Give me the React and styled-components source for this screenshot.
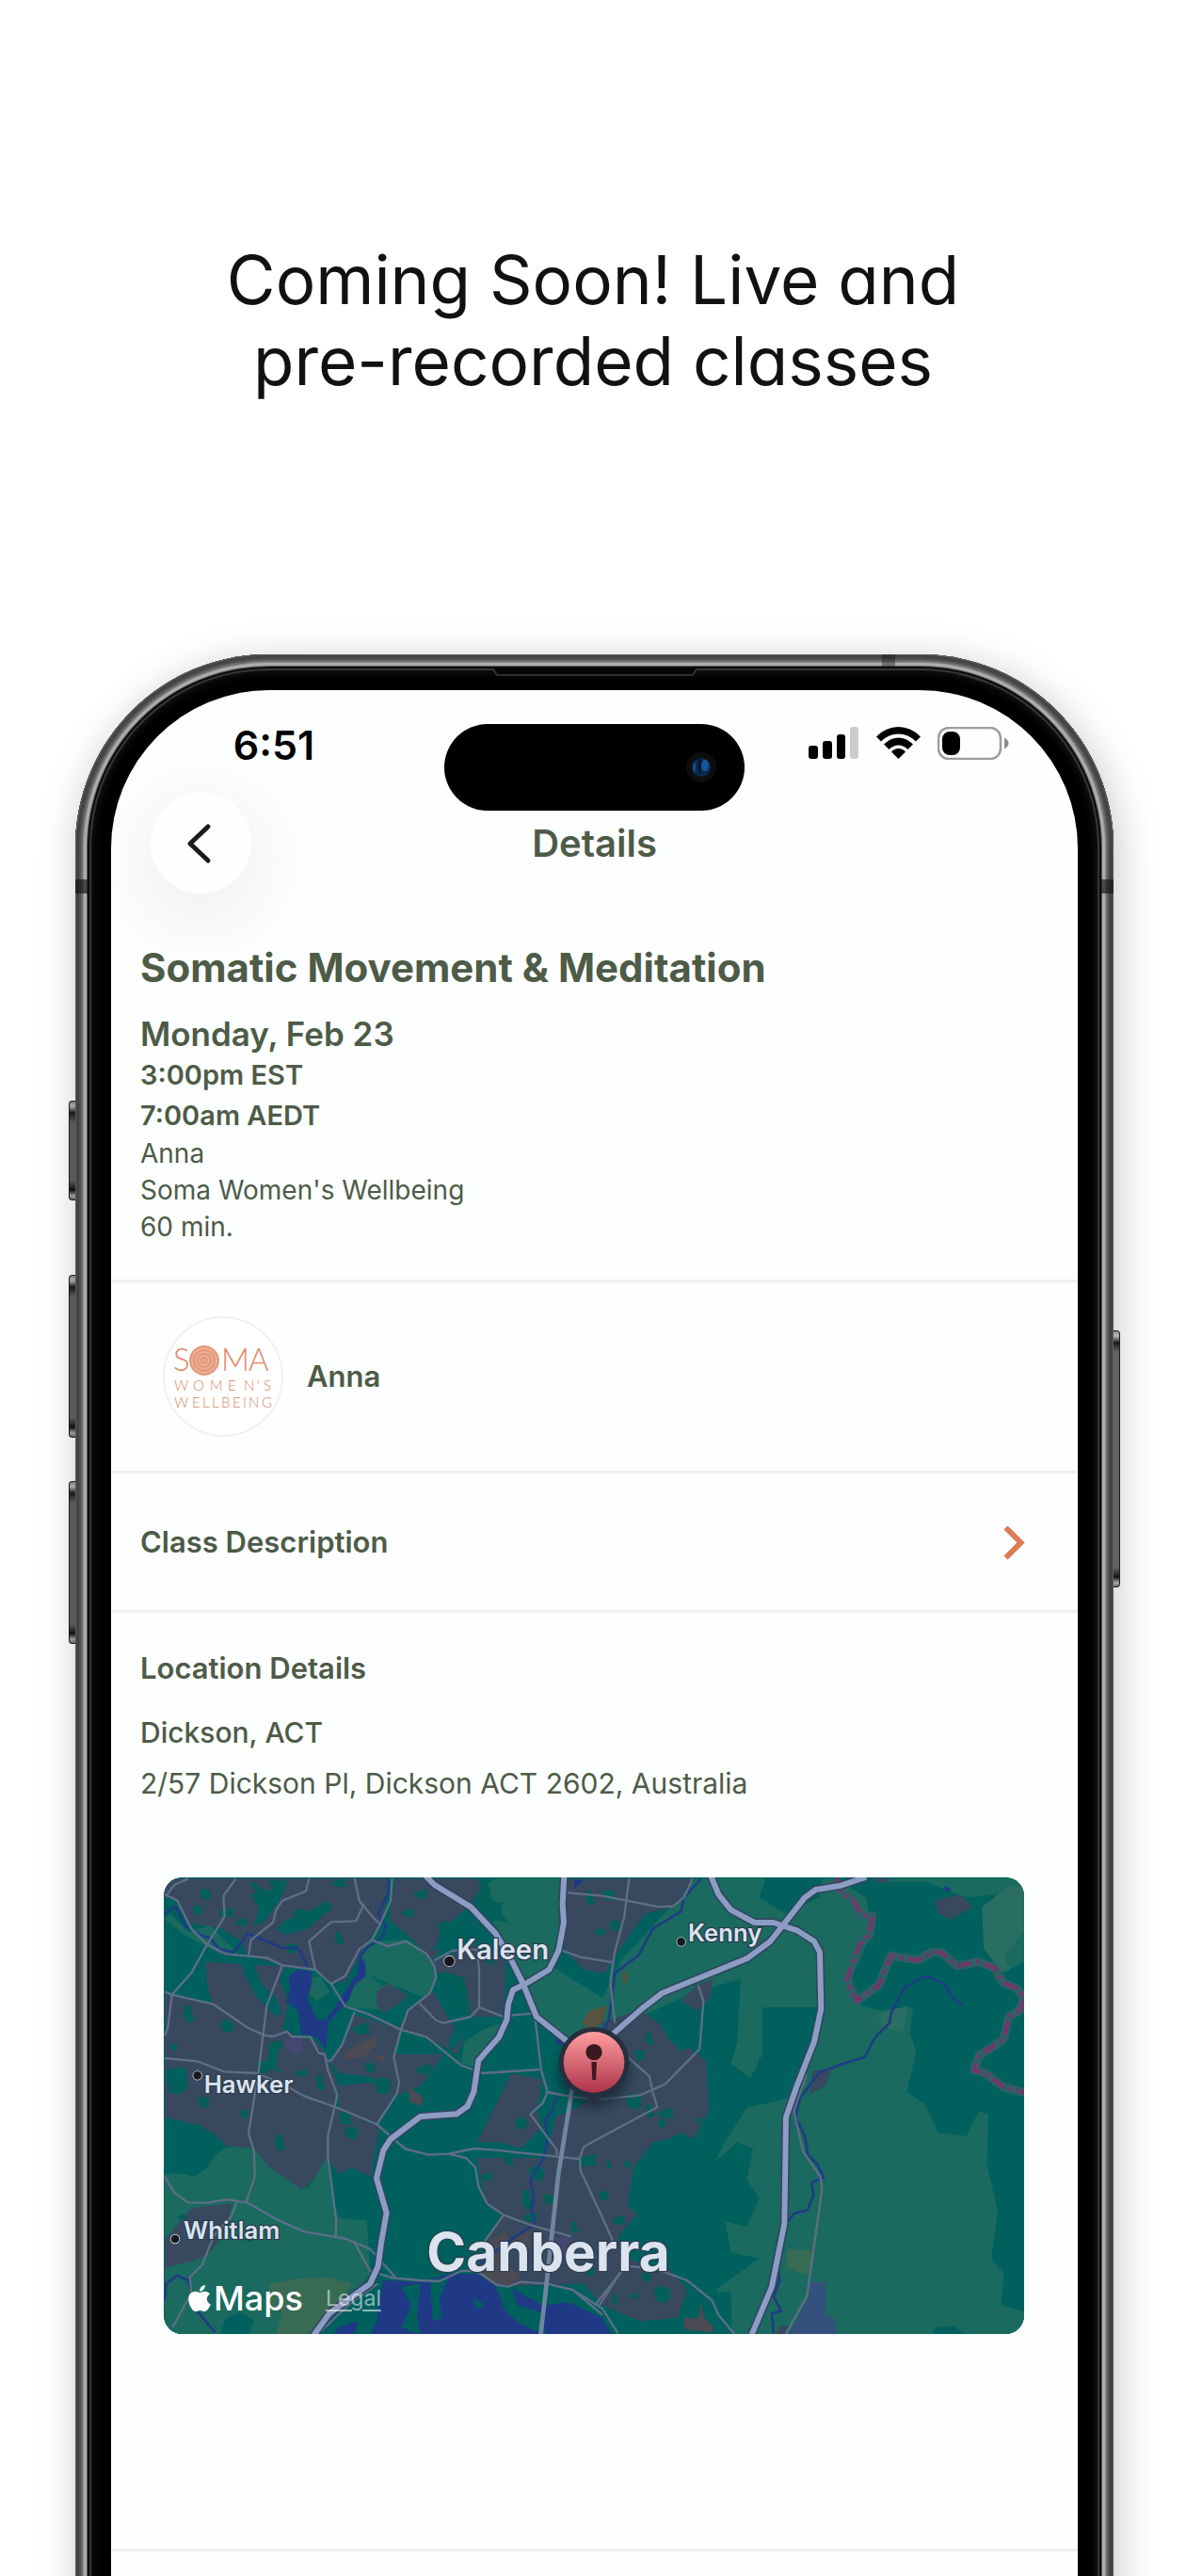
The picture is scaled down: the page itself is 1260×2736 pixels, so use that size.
import React from "react";
import styled, { createGlobalStyle } from "styled-components";
import { FaApple } from "react-icons/fa";

const ink = "#4d5b47";
const line = "#eff1f0";

const GlobalStyle = createGlobalStyle`
  *, *::before, *::after { box-sizing: border-box; }
  body {
    margin: 0;
    background: #fff;
    font-family: Inter, "Liberation Sans", sans-serif;
    -webkit-font-smoothing: antialiased;
  }
  h1, h2, h3, p { margin: 0; }
  button { font: inherit; border: 0; cursor: pointer; }
`;

const Page = styled.div`
  min-height: 100vh;
  display: flex;
  flex-direction: column;
  overflow: hidden;
  background: #fff;
`;

const Hero = styled.header`
  padding: 254px 40px 269px;
  display: flex;
  justify-content: center;
`;

const Headline = styled.h1`
  max-width: 840px;
  font-size: 71px;
  line-height: 86px;
  font-weight: 400;
  font-feature-settings: "cv11";
  color: #111;
  text-align: center;
`;

const Device = styled.div`
  flex: 1;
  display: flex;
  padding: 0 70px 0 73px;
  margin-bottom: -40px;
`;

const Rail = styled.div`
  flex: none;
  width: 7px;
  padding-top: ${(p) => p.$top}px;
  display: flex;
  flex-direction: column;
  position: relative;
`;

const SideKey = styled.div`
  height: ${(p) => p.$length}px;
  margin-bottom: ${(p) => p.$after || 0}px;
  border-radius: ${(p) => (p.$right ? "0 4px 4px 0" : "4px 0 0 4px")};
  border: solid #1c1c1d;
  border-width: ${(p) => (p.$right ? "1px 1px 1px 0" : "1px 0 1px 1px")};
  background: linear-gradient(180deg, #8b8b8d 0, #b9b9bb 5px, #1a1a1b 12px, #626264 22px,
    #626264 calc(100% - 20px), #111 calc(100% - 10px), #a9a9ab calc(100% - 4px), #6b6b6d 100%);
`;

const Frame = styled.div`
  flex: 1;
  min-width: 0;
  position: relative;
  padding: 38px 38px 0;
  display: flex;
  border-radius: 205px 205px 0 0;
  background: #000;
  box-shadow:
    inset 0 0 0 1px #5b5d5c,
    inset 0 0 0 4px #434345,
    inset 0 0 0 6px #505052,
    inset 0 0 0 8px #6c6c6e,
    inset 0 0 0 9px #8d8d8f,
    inset 0 0 0 12px #acacae,
    inset 0 0 0 13px #5d5d5f,
    inset 0 0 0 15px #0c0c0c,
    inset 0 0 0 17px #363637,
    inset 0 0 8px 19px #161616,
    4px 8px 44px rgba(0, 0, 0, 0.22);
`;

const Band = styled.span`
  position: absolute;
  background: rgba(20, 20, 22, 0.65);
  width: ${(p) => (p.$side === "top" ? 14 : 13)}px;
  height: ${(p) => (p.$side === "top" ? 13 : 15)}px;
  top: ${(p) => (p.$side === "top" ? 0 : 239)}px;
  ${(p) => (p.$side === "left" ? "left: 0;" : "")}
  ${(p) => (p.$side === "right" ? "right: 0;" : "")}
  ${(p) => (p.$side === "top" ? "right: 232px; opacity: 0.6;" : "")}
`;

const Earpiece = styled.svg`
  position: absolute;
  top: 15px;
  left: 50%;
  width: 224px;
  height: 9px;
  margin-left: -112px;
`;

const Screen = styled.main`
  flex: 1;
  min-width: 0;
  border-radius: 168px 168px 0 0;
  background: #fdfefe;
  color: ${ink};
  overflow: hidden;
`;

const StatusBar = styled.div`
  height: 109px;
  padding-top: 36px;
  display: grid;
  grid-template-columns: 1fr 319px 1fr;
  align-items: start;
  position: relative;
`;

const Clock = styled.div`
  padding-right: 8px;
  text-align: center;
  font-size: 43px;
  line-height: 44px;
  font-weight: 600;
  color: #000;
`;

const Island = styled.div`
  height: 92px;
  border-radius: 46px;
  background: #000;
  display: flex;
  align-items: center;
  justify-content: flex-end;
  padding-right: 30px;
`;

const StatusIcons = styled.div`
  height: 40px;
  padding-right: 6px;
  display: flex;
  align-items: center;
  justify-content: center;
  gap: 18px;
  svg { display: block; }
`;

const NavBar = styled.div`
  padding: 0 42px;
  display: grid;
  grid-template-columns: 107px 1fr 107px;
  align-items: center;
`;

const BackButton = styled.button`
  width: 107px;
  height: 107px;
  padding: 0 3px 0 0;
  border-radius: 50%;
  background: #fdfefe;
  display: grid;
  place-items: center;
  box-shadow: 0 20px 90px 6px rgba(0, 0, 0, 0.08), 0 0 2px #fff;
`;

const NavTitle = styled.h2`
  text-align: center;
  font-size: 40px;
  line-height: 50px;
  font-weight: 600;
`;

const Section = styled.section`
  border-bottom: 3px solid ${line};
  padding: ${(p) => p.$pad};
`;

const ClassTitle = styled.h2`
  font-size: 42px;
  line-height: 50px;
  font-weight: 700;
  margin-bottom: 24px;
`;

const DateLine = styled.p`
  font-size: 35px;
  line-height: 43px;
  font-weight: 600;
`;

const TimeLine = styled.p`
  font-size: 29px;
  line-height: 43px;
  font-weight: 600;
`;

const MetaLine = styled.p`
  font-size: 28px;
  line-height: 39px;
`;

const Teacher = styled.section`
  border-bottom: 3px solid ${line};
  padding: 36px 55px;
  display: flex;
  align-items: center;
  gap: 25px;
`;

const Avatar = styled.div`
  width: 128px;
  height: 128px;
  border-radius: 50%;
  border: 2px solid ${line};
  background: #fff;
  overflow: hidden;
  svg { display: block; }
`;

const RowLabel = styled.h3`
  font-size: 31px;
  line-height: 40px;
  font-weight: 600;
`;

const LinkRow = styled.button`
  width: 100%;
  padding: 53px 56px 52px 31px;
  border-bottom: 3px solid ${line};
  background: none;
  color: inherit;
  display: flex;
  align-items: center;
  justify-content: space-between;
  text-align: left;
  svg { display: block; }
`;

const Place = styled.p`
  font-size: 30px;
  line-height: 40px;
  margin-top: ${(p) => p.$gap}px;
  font-weight: ${(p) => p.$weight || 400};
`;

const MapCard = styled.div`
  position: relative;
  height: 485px;
  margin: 80px 26px 0 25px;
  border-radius: 20px;
  overflow: hidden;
  background: #00605e;
  > svg { display: block; width: 100%; height: 100%; }
`;

const MapCredit = styled.div`
  position: absolute;
  left: 25px;
  bottom: 14px;
  display: flex;
  align-items: center;
  color: #fff;
  font-size: 36px;
  line-height: 48px;
  font-weight: 500;
  svg { width: 26px; height: 32px; margin-right: 2px; }
`;

const Legal = styled.a`
  margin-left: 24px;
  font-size: 23px;
  font-weight: 400;
  color: rgba(255, 255, 255, 0.55);
  text-underline-offset: 4px;
`;

/* ---- map data ---- */

const meadows = [
  "1100,40 1320,40 1320,200 1280,320 1440,420 1500,300 1740,40 1960,40 1940,100 2020,150 2130,100 2140,40 2190,40 2280,100 2300,200 2260,300 2220,370 2250,440 2320,460 2430,450 2420,530 2440,590 2410,720 2470,760 2510,850 2600,860 2640,780 2670,790 2665,950 2700,1100 2680,1250 2720,1300 2710,1400 2790,1420 2790,1495 1850,1495 1850,1390 1800,1350 1940,1250 1850,1230 1830,1130 1900,1150 1940,1060 1900,1000 1920,900 1870,880 1800,940 1830,880 1900,770 2030,740 2060,660 2110,560 2130,450 2000,450 1980,500 2000,600 1940,610 1920,680 1850,630 1870,560 1880,360 1740,400 1560,480 1460,620 1300,560 1230,480 1180,370 1130,300 1090,170 1140,180 1060,70",
  "2330,50 2470,50 2600,100 2700,90 2660,260 2720,340 2790,300 2790,40 2330,40",
  "690,240 820,235 900,300 910,360 880,420 850,410 780,380 720,400 740,460 640,450 620,440 640,380 680,340 665,280",
  "45,980 110,980 140,990 230,900 310,880 400,960 500,1030 560,930 580,1060 600,1120 690,1130 700,1300 640,1380 520,1495 45,1495",
  "1000,560 1060,520 1120,500 1100,560 1040,640 990,630",
  "500,360 540,350 570,400 530,430 505,410",
  "60,150 120,210 190,190 280,280 220,280 110,220 45,170",
];

const suburbs = [
  "60,40 640,40 760,40 740,180 690,240 620,370 580,370 520,330 420,315 310,285 290,240 230,200 120,180 80,110 45,100 45,60",
  "175,305 430,320 410,360 440,430 420,520 470,540 530,560 560,600 600,700 590,770 730,830 700,990 640,960 600,980 560,930 520,1000 480,1030 380,960 330,900 240,890 200,850 130,820 45,800 45,410 200,440 180,380",
  "780,40 1040,40 1060,80 1020,130 940,240 900,300 820,220 760,170",
  "900,300 1040,250 1130,300 1130,400 1120,480 1020,480 1010,420 960,340 910,340",
  "820,460 900,400 960,500 1000,540 980,600 870,540 790,520",
  "640,470 800,520 780,600 935,600 860,700 790,730 700,670 600,660 570,620 630,540",
  "720,400 760,375 820,410 790,440 740,470 720,440",
  "600,700 700,690 790,720 720,820 600,770",
  "1040,880 1150,660 1250,680 1230,780 1250,830 1180,900 1110,880",
  "1380,760 1440,500 1560,455 1770,620 1780,780 1730,870 1690,850 1650,870 1600,880 1540,960 1520,1080 1550,1110 1490,1180 1510,1250 1660,1290 1710,1350 1680,1440 1560,1450 1440,1400 1380,1330 1100,1340 1030,1290 1080,1180 1120,1110 1070,1080 1040,930 1260,930 1290,800",
  "1330,40 1730,40 1670,130 1580,150 1540,200 1470,300 1450,340 1380,330 1320,270 1320,100",
  "1740,380 1790,360 1785,420 1740,460 1690,430",
  "130,1090 260,1075 240,1170 180,1240 130,1260 45,1280 45,1190",
  "2500,110 2580,90 2620,130 2550,170 2510,150",
  "2110,650 2170,650 2150,700 2100,730",
  "2290,40 2370,40 2330,55",
  "2000,1470 2040,1460 2020,1495 1995,1495",
];

const lakes = [
  "440,350 470,330 510,335 515,370 500,420 530,490 560,490 600,430 640,370 660,340 665,280 685,310 685,350 650,380 630,430 600,460 565,500 560,585 530,545 480,535 470,460 430,430 445,400",
  "740,1320 860,1325 950,1300 1040,1300 1100,1340 1150,1345 1250,1400 1330,1390 1440,1440 1470,1495 700,1495 720,1450",
  "1290,545 1320,545 1320,570 1295,568",
  "580,1495 600,1470 660,1450 650,1495",
  "1350,40 1380,45 1350,70",
  "2530,65 2550,70 2545,82 2530,78",
];

const shore = [
  "800,1340 830,1400 800,1470 860,1495 850,1440 860,1330",
  "890,1320 950,1310 920,1380 930,1440 900,1450",
  "1100,1340 1150,1340 1170,1400 1240,1420 1260,1495 1180,1460 1130,1420",
  "1030,1380 1065,1395 1050,1410 1030,1400",
];

const parks = [
  [175, 90, 18], [240, 150, 22], [120, 470, 24], [75, 575, 14], [245, 510, 22], [400, 570, 20], [350, 100, 30],
  [400, 60, 24], [480, 160, 26], [600, 55, 20], [600, 230, 18], [330, 60, 12], [150, 140, 16], [290, 180, 18],
  [560, 130, 14], [450, 260, 20], [360, 640, 22], [90, 700, 26], [410, 880, 22], [170, 750, 22], [300, 790, 14],
  [480, 660, 18], [540, 690, 20], [620, 800, 26], [640, 850, 22], [670, 520, 26], [840, 560, 22], [700, 640, 20],
  [740, 700, 28], [870, 650, 24], [1070, 100, 34], [1100, 130, 28], [940, 200, 26], [860, 90, 20], [990, 380, 26],
  [1000, 440, 22], [1080, 300, 16], [820, 150, 18], [1400, 100, 20], [1460, 90, 22], [1480, 190, 18], [1430, 210, 16],
  [1590, 550, 18], [1560, 600, 20], [1540, 750, 26], [1640, 790, 24], [1590, 780, 18], [1750, 810, 12],
  [1630, 820, 14], [1390, 940, 28], [1460, 950, 12], [1520, 950, 14], [1445, 1050, 16], [1490, 1130, 20],
  [1200, 1060, 26], [1270, 1060, 20], [1230, 980, 26], [1210, 1120, 22], [1350, 1150, 16], [1440, 1240, 22],
  [1630, 1365, 28], [1540, 1370, 14], [1480, 1380, 14], [1400, 1290, 18], [1580, 1310, 16], [1070, 990, 18],
  [1140, 930, 20], [1290, 630, 18], [1180, 820, 20], [100, 1120, 14], [310, 1180, 14],
];

const thickets = [
  "45,820 80,850 150,820 210,860 220,900 180,960 140,990 100,960 45,900",
  "1950,450 2010,450 2010,560 2050,600 1960,720 1890,700 1950,620",
  "240,1440 290,1420 330,1450 310,1495 220,1495",
  "1800,1360 1850,1355 1850,1440 1800,1440",
  "2500,1470 2560,1465 2600,1495 2490,1495",
  "1620,480 1700,520 1750,560 1690,590 1640,540",
  "320,90 400,70 420,50 440,40 410,110 360,180 330,190 345,130",
  "430,170 500,150 560,110 580,130 500,200 430,220 400,200",
  "290,310 330,310 350,370 400,420 420,470 400,480 340,420 300,350",
  "380,560 410,580 400,640 420,660 370,640",
  "900,270 930,200 1010,130 1040,90 1060,60 1090,130 1000,190 940,260",
  "950,340 1000,360 1015,440 1000,540 960,590 950,560 985,480 960,400",
  "45,650 110,640 120,690 90,730 60,720",
  "740,380 760,372 700,350",
];

const minorRoads = [
  "45,90 85,110 130,200 180,250 240,280 370,292 420,316 525,330 575,375 620,447 690,470 800,522 880,545 990,635 1060,660 1240,648",
  "272,40 232,95 236,160 180,250 130,340 68,410 45,400", "68,410 55,515 45,540", "120,40 75,60 50,95",
  "505,40 495,80 420,110 400,140 390,180 320,235 312,285",
  "68,410 200,440 310,515 360,538 390,543 435,527 450,543 510,545 535,595 555,600 565,650 595,730 565,860 565,930 592,1130 590,1180",
  "420,316 370,445 345,650 312,850 330,910 332,990 305,1070",
  "45,612 150,622 235,655 340,660 430,700 490,733 590,768 720,822 810,900 885,920 950,917 1030,900 1100,905 1365,933",
  "650,40 665,110 710,165 732,185", "680,120 655,175 575,178 505,240 525,330",
  "770,40 765,110 732,185 705,235 665,265 620,350 575,375", "705,235 755,255 815,240 880,280 905,320 910,355 890,405 820,460 798,522 775,610 792,690 785,725 722,822",
  "650,465 610,570 575,620 560,620", "905,300 960,270 1040,265 1047,330 1047,450 1020,480 935,500 910,492 855,435",
  "1047,450 1120,478 1215,470", "1220,440 1245,650 1265,720 1250,755 1210,790 1295,905 1295,920",
  "45,990 75,1040 120,1072 180,1073 245,1062 310,1073 410,1130 490,1165 620,1187 700,1220 780,1310",
  "275,1070 255,1120 200,1180 165,1270 125,1310 130,1360 70,1470", "650,1200 700,1290 770,1312 860,1320 920,1323 990,1290 1040,1290 1105,1335 1140,1340 1180,1325 1260,1330 1345,1350 1440,1430",
  "725,1330 640,1390 540,1485", "950,917 1005,930 1035,960 1045,1020 1072,1075 1125,1112 1215,1145 1340,1180",
  "1125,1112 1065,1195", "1330,85 1440,95 1620,130 1665,128 1700,100 1728,40", "1525,40 1510,160 1480,270 1465,370 1480,500",
  "1300,265 1370,290 1475,307", "1265,720 1340,735 1440,743 1560,730 1640,695 1750,583 1762,430 1745,380",
  "1500,590 1590,670 1600,720 1615,768 1440,862 1380,895 1368,930 1370,970 1440,1120 1480,1210",
  "1520,1275 1600,1280 1710,1320 1790,1385 1810,1430 1860,1490", "1510,1280 1415,1400", "1500,1290 1430,1400",
  "2090,665 2050,780 2080,910 2135,990 2140,1030 2092,1370 2025,1490",
  "1345,1350 1440,1410 1490,1490",
];

const streams = [
  "45,150 80,130 110,190 160,220 190,230 220,265 265,275 310,215 420,260 470,262 500,320",
  "757,40 757,90 725,150 750,190 740,225 690,260 667,290",
  "45,1380 50,1330 85,1305 120,1320 150,1420 205,1485",
  "1295,730 1280,780 1258,810 1265,860 1255,925 1210,1000 1222,1060 1213,1090 1225,1140 1150,1190 1050,1265",
  "1755,40 1700,100 1690,145 1600,200 1555,285 1480,340 1470,420 1460,490 1445,520",
  "2588,442 2553,418 2535,380 2490,357 2463,352 2400,390 2360,470 2355,500 2310,545 2275,610 2230,622 2130,658 2070,740 2055,800 2085,860 2095,920 2125,950 2145,993 2107,1008 2113,1050 2093,1097 2050,1107 2020,1150",
  "2000,1290 2005,1320 1985,1370 2010,1418 1980,1425 1985,1490",
];

const highways = [
  "875,30 905,60 1020,130 1100,215 1150,300 1185,370 1230,480 1330,560 1410,620",
  "1318,30 1313,120 1317,180 1300,270 1270,330 1195,375 1155,395 1140,440 1135,490 1110,545 1070,590 1045,620 1030,720 1010,765 975,790 860,798 765,870 742,905 720,995 752,1105 735,1200 725,1275 700,1330 570,1425 520,1495",
  "2280,35 2200,62 2120,75 2085,100 2030,170 1975,240 1900,295 1760,352 1630,405 1565,455 1485,525 1410,590",
  "1785,30 1810,90 1850,140 1925,180 1985,180 2060,205 2115,240 2133,275 2137,455 2115,560 2060,700 2025,800 2020,1140 1980,1340 1915,1495",
];

const boundary =
  "2185,40 2200,80 2240,110 2265,155 2300,160 2290,220 2260,250 2220,360 2250,430 2320,380 2360,285 2445,300 2490,275 2520,275 2570,318 2640,305 2690,325 2715,370 2760,390 2785,420 2770,460 2735,480 2720,550 2640,605 2625,650 2660,660 2720,705 2790,722";

const towns = [
  { name: "Kaleen", x: 976, y: 297, size: 88, dot: [952, 303, 16] },
  { name: "Hawker", x: 170, y: 723, size: 77, dot: [149, 667, 13] },
  { name: "Whitlam", x: 105, y: 1188, size: 77, dot: [78, 1188, 13] },
  { name: "Kenny", x: 1713, y: 240, size: 77, dot: [1691, 241, 13] },
  { name: "Canberra", x: 880, y: 1291, size: 170, weight: 700 },
];

const outlines = [
  [-1, -0.5, -0.2, -1, 0.8, -0.7, 1, 0.3, 0.4, 1, -0.7, 0.7],
  [-1.2, 0, -0.4, -0.5, 1.1, -0.8, 0.9, 0, 1.3, 0.5, -0.3, 0.6],
  [-0.5, -1.2, 0.3, -1, 0.5, 0, 0.9, 0.9, 0, 1.3, -0.7, 0.4],
  [-0.9, -0.7, 0.9, -0.5, 0.6, 0.2, 0.8, 0.8, -0.5, 0.9, -0.7, 0.1],
];

const patch = ([x, y, s], i) =>
  outlines[i % outlines.length].map((v, k) => Math.round((k % 2 ? y : x) + v * s)).join(" ");

const Polys = ({ list, fill }) => (
  <g fill={fill}>
    {list.map((points) => (
      <polygon key={points} points={points} />
    ))}
  </g>
);

const Lines = ({ list, stroke, width }) => (
  <g fill="none" stroke={stroke} strokeWidth={width} strokeLinejoin="round">
    {list.map((points) => (
      <polyline key={points} points={points} />
    ))}
  </g>
);

function MapDrawing() {
  return (
    <svg viewBox="42 36 2742 1455" preserveAspectRatio="xMidYMid slice" role="img" aria-label="Map of Canberra">
      <defs>
        <linearGradient id="pin" x1="0" y1="0" x2="0" y2="1">
          <stop offset="0" stopColor="#ff9ea0" />
          <stop offset="1" stopColor="#ad3449" />
        </linearGradient>
        <filter id="soft" x="-50%" y="-50%" width="200%" height="200%">
          <feGaussianBlur stdDeviation="16" />
        </filter>
      </defs>
      <rect x="42" y="36" width="2742" height="1455" fill="#00605e" />
      <Polys list={meadows} fill="#1a6a5f" />
      <Polys list={suburbs} fill="#38495f" />
      <Polys list={thickets} fill="#00605e" />
      <Polys list={parks.map(patch)} fill="#045f59" />
      <Polys
        list={["2650,130 2740,60 2790,60 2790,200 2720,290 2740,330 2710,340 2655,260", "2320,470 2415,445 2400,530 2330,510"]}
        fill="#2a6d62"
      />
      <Polys
        list={["380,1330 470,1315 560,1310 640,1330 600,1400 560,1440 500,1490 400,1490 420,1420 370,1400", "2030,1220 2110,1225 2100,1305 2025,1280"]}
        fill="#386b54"
      />
      <Polys
        list={["620,590 720,540 720,570 680,610 620,615", "700,600 750,605 740,625", "825,705 870,740 860,765 825,750", "1080,1190 1130,1165 1150,1200 1110,1240 1180,1310 1130,1340 1050,1300 1100,1270", "1150,1190 1210,1160 1210,1220 1180,1220", "1700,1440 1745,1440 1755,1395 1765,1440 1795,1470 1790,1485 1700,1475"]}
        fill="#4c4a52"
      />
      <Polys list={["1375,500 1400,460 1455,445 1440,500 1400,520", "1500,350 1515,335 1522,360 1510,378"]} fill="#57533f" />
      <Polys list={["430,548 482,545 484,595 455,598 430,575", "1290,1185 1340,1180 1345,1240 1290,1250"]} fill="#464672" />
      <Polys list={["2100,1325 2150,1325 2150,1430 2180,1440 2185,1491 2035,1491 2100,1370"]} fill="#34507c" />
      <Polys list={lakes} fill="#1f3987" />
      <Polys list={shore} fill="#00605e" />
      <Lines list={streams} stroke="#1f3c85" width={8} />
      <Lines list={minorRoads} stroke="#5d6e86" width={7} />
      <Lines list={["1345,700 1300,980 1262,1330 1243,1495"]} stroke="#7086a0" width={14} />
      <Lines list={[boundary]} stroke="#2f5f65" width={28} />
      <g fill="none" stroke="#70386c" strokeWidth="13" strokeDasharray="46 16 12 16">
        <polyline points={boundary} />
      </g>
      <Lines list={highways} stroke="#34425d" width={27} />
      <Lines list={highways} stroke="#8c9dc4" width={18} />

      <circle cx="1413" cy="660" r="112" fill="#0b1a26" opacity="0.55" filter="url(#soft)" />
      <path d="M1378 722 L1413 764 L1448 722 Z" fill="#272e3d" />
      <circle cx="1413" cy="625" r="112" fill="#272e3d" />
      <circle cx="1413" cy="625" r="97" fill="url(#pin)" />
      <circle cx="1413" cy="593" r="26" fill="#3c1920" />
      <path d="M1405 624 H1422 L1419 682 H1408 Z" fill="#3c1920" />

      <g fontFamily="Inter, sans-serif" fill="#dbe3ee" stroke="#2c3c50" strokeWidth="8" paintOrder="stroke" strokeLinejoin="round">
        {towns.map((t) => (
          <React.Fragment key={t.name}>
            {t.dot && <circle cx={t.dot[0]} cy={t.dot[1]} r={t.dot[2]} fill="#17171d" stroke="#c4ccd6" strokeWidth="5" />}
            <text x={t.x} y={t.y} fontSize={t.size} fontWeight={t.weight || 600}>
              {t.name}
            </text>
          </React.Fragment>
        ))}
      </g>
    </svg>
  );
}

function SomaLogo() {
  const rings = [15, 13, 11, 9, 7, 5, 3];
  return (
    <svg width="124" height="124" viewBox="0 0 124 124" role="img" aria-label="Soma Women's Wellbeing">
      <circle cx="42" cy="45" r="16" fill="#e9a78d" />
      {rings.map((r, i) => (
        <circle key={r} cx="42" cy="45" r={r} fill="none" stroke={i % 2 ? "#ecb49b" : "#e08d6c"} strokeWidth="1" />
      ))}
      <g fill="#df8563" fontFamily="Lato, sans-serif" fontWeight="300">
        <text y="56" fontSize="33" x="9 60 89">SMA</text>
        <text y="77" fontSize="15" x="10 30 48 67 84 98 105">WOMEN'S</text>
        <text y="95" fontSize="15" x="10 29 40 50 60 72 83 89 103">WELLBEING</text>
      </g>
    </svg>
  );
}

export default function App() {
  return (
    <Page>
      <GlobalStyle />
      <Hero>
        <Headline>Coming Soon! Live and pre-recorded classes</Headline>
      </Hero>
      <Device>
        <Rail $top={474}>
          <SideKey $length={106} $after={79} />
          <SideKey $length={173} $after={46} />
          <SideKey $length={173} />
        </Rail>
        <Frame>
          <Band $side="left" />
          <Band $side="right" />
          <Band $side="top" />
          <Earpiece viewBox="0 0 224 9" aria-hidden="true">
            <path d="M0 1 L4 1 L8 7 H216 L220 1 L224 1" fill="none" stroke="#303031" strokeWidth="2" />
            <path d="M5 0 H219 L215 6 H9 Z" fill="#050505" />
          </Earpiece>
          <Screen>
            <StatusBar>
              <Clock>6:51</Clock>
              <Island>
                <svg width="32" height="32" viewBox="0 0 32 32" aria-hidden="true">
                  <circle cx="16" cy="16" r="16" fill="#0d0d0e" />
                  <circle cx="16" cy="16" r="10" fill="#0a2a55" />
                  <path d="M9 10 Q5 16 9 22 Q11 16 9 10Z" fill="#15528c" />
                  <path d="M13 7 Q12 16 14 25 Q17 17 16 7Z" fill="#061430" />
                  <ellipse cx="20" cy="14" rx="4" ry="6" fill="#145a9a" />
                </svg>
              </Island>
              <StatusIcons>
                <svg width="54" height="34" viewBox="0 0 54 34" aria-label="Signal">
                  <rect x="0" y="20" width="10" height="14" rx="3" />
                  <rect x="15" y="15" width="10" height="19" rx="3" />
                  <rect x="30" y="8" width="9" height="26" rx="3" />
                  <rect x="44" y="0" width="9" height="34" rx="3" fill="#cbcdcc" />
                </svg>
                <svg width="47" height="34" viewBox="0 0 47 34" aria-label="Wi-Fi">
                  <path d="M0 10.5 Q10 0 23.500 0 T47 10.500 L42 15.500 Q34 7.500 23.500 7.500 T5 15.500 Z" />
                  <path d="M8 18.500 Q15 11.500 23.500 11.500 T39 18.500 L33.500 24 Q29 19.500 23.500 19.500 T13.500 24 Z" />
                  <path d="M16 26.500 Q19 23 23.500 23 T31 26.500 L23.500 34 Z" />
                </svg>
                <svg width="76" height="35" viewBox="0 0 76 35" aria-label="Battery">
                  <rect x="1" y="1" width="66" height="33" rx="11" fill="none" stroke="#9b9d9c" strokeWidth="2.5" />
                  <rect x="5" y="5" width="19" height="25" rx="8" />
                  <path d="M71 11.500 Q75.500 14 75.500 17.500 T71 23.500 Z" fill="#8b8d8c" />
                </svg>
              </StatusIcons>
            </StatusBar>

            <NavBar>
              <BackButton aria-label="Back">
                <svg width="28" height="44" viewBox="0 0 28 44" aria-hidden="true">
                  <path d="M23 4 L4 22 L23 40" fill="none" stroke="#1b1b1b" strokeWidth="5" strokeLinecap="round" strokeLinejoin="round" />
                </svg>
              </BackButton>
              <NavTitle>Details</NavTitle>
            </NavBar>

            <Section $pad="54px 31px 36px">
              <ClassTitle>Somatic Movement &amp; Meditation</ClassTitle>
              <DateLine>Monday, Feb 23</DateLine>
              <TimeLine>3:00pm EST</TimeLine>
              <TimeLine>7:00am AEDT</TimeLine>
              <MetaLine>Anna</MetaLine>
              <MetaLine>Soma Women's Wellbeing</MetaLine>
              <MetaLine>60 min.</MetaLine>
            </Section>

            <Teacher>
              <Avatar>
                <SomaLogo />
              </Avatar>
              <RowLabel>Anna</RowLabel>
            </Teacher>

            <LinkRow>
              <RowLabel as="span">Class Description</RowLabel>
              <svg width="23" height="37" viewBox="0 0 23 37" aria-hidden="true">
                <path d="M2.500 2.500 L18.500 18.500 L2.500 34.500" fill="none" stroke="#de7a54" strokeWidth="6" />
              </svg>
            </LinkRow>

            <Section $pad="39px 31px 228px">
              <RowLabel>Location Details</RowLabel>
              <Place $gap={28} $weight={500}>Dickson, ACT</Place>
              <Place $gap={14}>2/57 Dickson Pl, Dickson ACT 2602, Australia</Place>
              <MapCard>
                <MapDrawing />
                <MapCredit>
                  <FaApple aria-hidden="true" />
                  Maps
                  <Legal href="#legal">Legal</Legal>
                </MapCredit>
              </MapCard>
            </Section>
          </Screen>
        </Frame>
        <Rail $top={718}>
          <SideKey $right $length={273} />
        </Rail>
      </Device>
    </Page>
  );
}
